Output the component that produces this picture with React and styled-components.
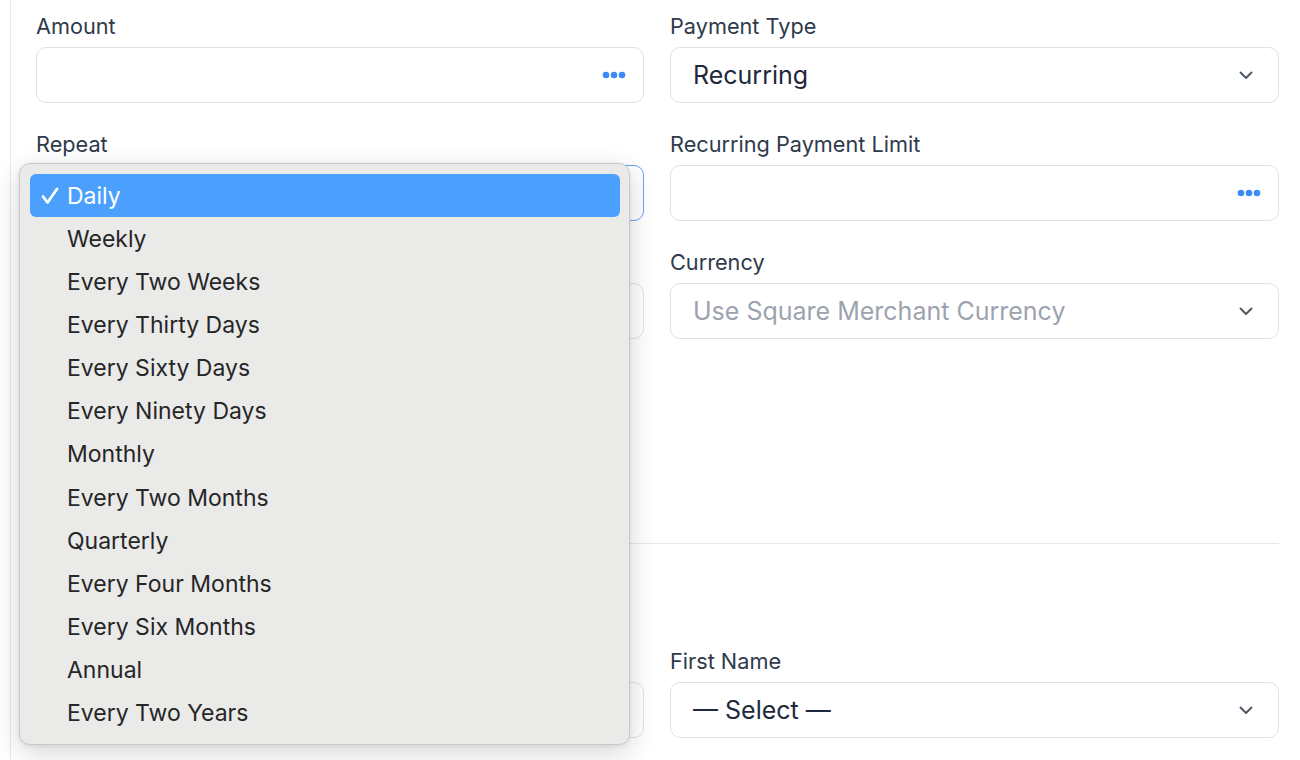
import React from "react";
import styled, { createGlobalStyle } from "styled-components";

const Global = createGlobalStyle`
  html, body { margin: 0; padding: 0; background: #fff; }
  body { font-family: Inter, "Noto Sans", sans-serif; -webkit-font-smoothing: antialiased; }
  * { box-sizing: border-box; }
`;

const Page = styled.div`
  width: 1300px;
  height: 760px;
  overflow: hidden;
  padding-left: 10px;
`;

const Panel = styled.div`
  height: 100%;
  border-left: 1px solid #e5e7eb;
  padding: 12px 21px 0 25px;
`;

const Grid = styled.div`
  display: grid;
  grid-template-columns: 608px 609px;
  column-gap: 26px;
  row-gap: 27px;
`;

const Field = styled.div`
  position: relative;
  display: flex;
  flex-direction: column;
  gap: 7px;
`;

const Label = styled.label`
  font-size: 21.7px;
  line-height: 28px;
  color: #2f3a4b;
  height: 28px;
`;

const Control = styled.div`
  height: 56px;
  border: 1px solid ${(p) => (p.$focused ? "#60a5fa" : "#dde1e8")};
  border-radius: 10px;
  background: #fff;
  display: flex;
  align-items: center;
  justify-content: space-between;
  padding: 0 22px 0 22px;
  font-size: 25px;
  color: ${(p) => (p.$placeholder ? "#9ca3af" : "#1e293b")};
`;

const Dots = styled.svg`
  width: 24px;
  height: 8px;
  margin-right: -5px;
`;

const Chevron = styled.svg`
  width: 16px;
  height: 10px;
  margin-right: 2px;
`;

const Divider = styled.div`
  grid-column: 1 / span 2;
  height: 1px;
  background: #e2e8f0;
  margin: 177px 0 76px;
`;

const Menu = styled.div`
  position: absolute;
  left: -17px;
  top: 33px;
  width: 611px;
  height: 582px;
  background: #eaeae9;
  border: 1px solid #c9c9c9;
  border-radius: 11px;
  box-shadow: 0 8px 28px rgba(0, 0, 0, 0.16), 0 1px 4px rgba(0, 0, 0, 0.08);
  padding: 10px 9px 10px 10px;
  display: flex;
  flex-direction: column;
  z-index: 10;
`;

const Item = styled.div`
  height: 43.15px;
  flex: none;
  display: flex;
  align-items: center;
  border-radius: 6px;
  padding-left: 37px;
  position: relative;
  font-size: 23px;
  color: ${(p) => (p.$selected ? "#ffffff" : "#262626")};
  background: ${(p) => (p.$selected ? "#4ca0fd" : "transparent")};
`;

const Check = styled.svg`
  position: absolute;
  left: 10px;
  top: 12px;
  width: 20px;
  height: 20px;
`;

const DotsIcon = () => (
  <Dots viewBox="0 0 24 8">
    <circle cx="4" cy="4" r="3.3" fill="#3b8cf7" />
    <circle cx="12" cy="4" r="3.3" fill="#3b8cf7" />
    <circle cx="20" cy="4" r="3.3" fill="#3b8cf7" />
  </Dots>
);

const ChevronIcon = () => (
  <Chevron viewBox="0 0 16 10">
    <path d="M2.5 2.5l5.5 5.5 5.5-5.5" fill="none" stroke="#4b5563" strokeWidth="1.9" strokeLinecap="round" strokeLinejoin="round" />
  </Chevron>
);

const options = [
  "Daily",
  "Weekly",
  "Every Two Weeks",
  "Every Thirty Days",
  "Every Sixty Days",
  "Every Ninety Days",
  "Monthly",
  "Every Two Months",
  "Quarterly",
  "Every Four Months",
  "Every Six Months",
  "Annual",
  "Every Two Years",
];

export default function App() {
  return (
    <Page>
      <Global />
      <Panel>
        <Grid>
          <Field>
            <Label>Amount</Label>
            <Control>
              <span />
              <DotsIcon />
            </Control>
          </Field>
          <Field>
            <Label>Payment Type</Label>
            <Control>
              <span>Recurring</span>
              <ChevronIcon />
            </Control>
          </Field>
          <Field>
            <Label>Repeat</Label>
            <Control $focused>
              <span>Daily</span>
              <ChevronIcon />
            </Control>
            <Menu>
              {options.map((o, i) => (
                <Item key={o} $selected={i === 0}>
                  {i === 0 && (
                    <Check viewBox="0 0 20 20">
                      <path d="M3 10.5l4.5 6L17 3" fill="none" stroke="#fff" strokeWidth="2.8" strokeLinecap="round" strokeLinejoin="round" />
                    </Check>
                  )}
                  {o}
                </Item>
              ))}
            </Menu>
          </Field>
          <Field>
            <Label>Recurring Payment Limit</Label>
            <Control>
              <span />
              <DotsIcon />
            </Control>
          </Field>
          <Field>
            <Label>Start Date</Label>
            <Control>
              <span />
            </Control>
          </Field>
          <Field>
            <Label>Currency</Label>
            <Control $placeholder>
              <span>Use Square Merchant Currency</span>
              <ChevronIcon />
            </Control>
          </Field>
          <Divider />
          <Field>
            <Label>Email</Label>
            <Control>
              <span />
            </Control>
          </Field>
          <Field>
            <Label>First Name</Label>
            <Control>
              <span>— Select —</span>
              <ChevronIcon />
            </Control>
          </Field>
        </Grid>
      </Panel>
    </Page>
  );
}
